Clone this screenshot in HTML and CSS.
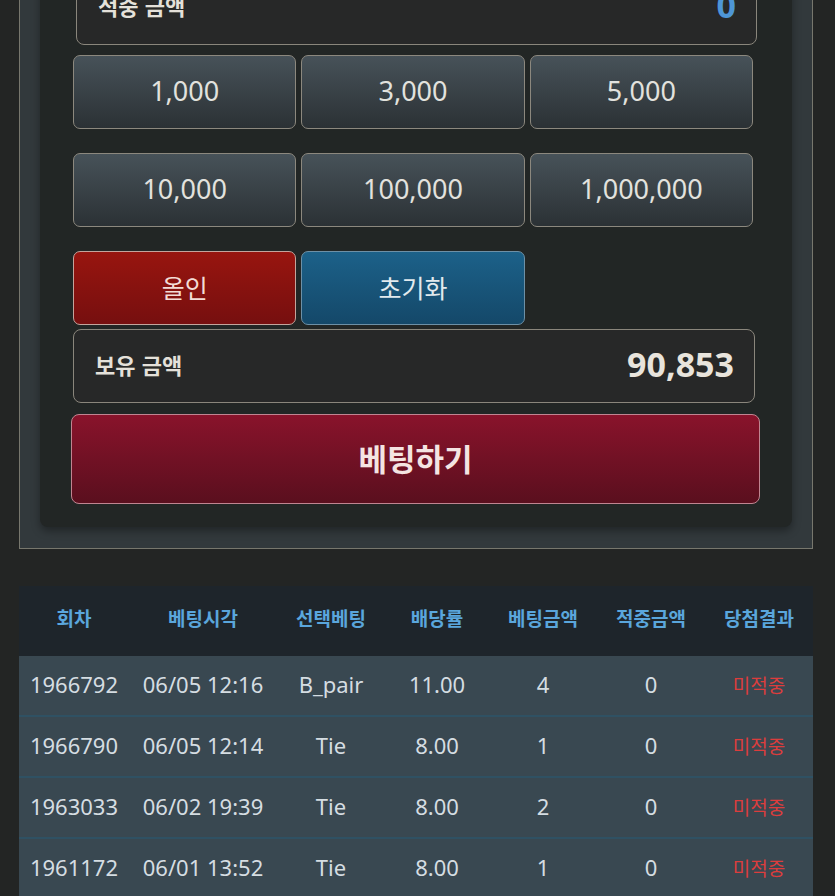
FILE: index.html
```html
<!DOCTYPE html>
<html lang="ko">
<head>
<meta charset="utf-8">
<title>베팅</title>
<link rel="stylesheet" href="styles.css">
</head>
<body>
    <div class="Wrap">
        <div class="Panel">
            <div class="Card">
                <div class="AmountBox HitBox">
                    <span class="AmountLabel">적중 금액</span>
                    <span class="AmountValue Blue">0</span>
                </div>

                <div class="ChipGrid">
                    <button class="Chip">1,000</button>
                    <button class="Chip">3,000</button>
                    <button class="Chip">5,000</button>
                    <button class="Chip">10,000</button>
                    <button class="Chip">100,000</button>
                    <button class="Chip">1,000,000</button>
                    <button class="Chip AllIn">올인</button>
                    <button class="Chip Reset">초기화</button>
                </div>

                <div class="AmountBox HoldBox">
                    <span class="AmountLabel">보유 금액</span>
                    <span class="AmountValue">90,853</span>
                </div>

                <button class="BetButton">베팅하기</button>
            </div>
        </div>

        <table class="History">
            <colgroup>
                <col style="width: 110px">
                <col style="width: 148px">
                <col style="width: 108px">
                <col style="width: 104px">
                <col style="width: 108px">
                <col style="width: 108px">
                <col style="width: 108px">
            </colgroup>
            <thead>
                <tr>
                    <th>회차</th>
                    <th>베팅시각</th>
                    <th>선택베팅</th>
                    <th>배당률</th>
                    <th>베팅금액</th>
                    <th>적중금액</th>
                    <th>당첨결과</th>
                </tr>
            </thead>
            <tbody>
                <tr>
                    <td>1966792</td>
                    <td>06/05 12:16</td>
                    <td>B_pair</td>
                    <td>11.00</td>
                    <td>4</td>
                    <td>0</td>
                    <td class="Miss">미적중</td>
                </tr>
                <tr>
                    <td>1966790</td>
                    <td>06/05 12:14</td>
                    <td>Tie</td>
                    <td>8.00</td>
                    <td>1</td>
                    <td>0</td>
                    <td class="Miss">미적중</td>
                </tr>
                <tr>
                    <td>1963033</td>
                    <td>06/02 19:39</td>
                    <td>Tie</td>
                    <td>8.00</td>
                    <td>2</td>
                    <td>0</td>
                    <td class="Miss">미적중</td>
                </tr>
                <tr>
                    <td>1961172</td>
                    <td>06/01 13:52</td>
                    <td>Tie</td>
                    <td>8.00</td>
                    <td>1</td>
                    <td>0</td>
                    <td class="Miss">미적중</td>
                </tr>
            </tbody>
        </table>
    </div>
</body>
</html>
```

FILE: styles.css
```css
body {
    margin: 0px;
    background-color: #232524;
    font-family: "Noto Sans", "Noto Sans CJK KR", sans-serif;
    overflow: hidden;
}

.Wrap {
    padding: 0px 22px 0px 19px;
}

/* outer slate frame, scrolled so its top is off screen */
.Panel {
    margin-top: -70px;
    border: 1px solid #77776d;
    background-color: #32393c;
    padding: 20px 20px 21px 20px;
}

.Card {
    background-color: #222625;
    border-radius: 8px;
    box-shadow: 0px 4px 8px rgba(0, 0, 0, 0.35);
    padding: 20px 32px 23px 31px;
}

.AmountBox {
    height: 74px;
    box-sizing: border-box;
    border: 1px solid #8a867c;
    border-radius: 8px;
    background-color: #272828;
    display: flex;
    align-items: center;
    justify-content: space-between;
    padding: 0px 20px 0px 21px;
}

.HitBox {
    margin: 0px 3px 0px 5px;
    padding-bottom: 6px;
}

.HoldBox {
    margin: 4px 5px 0px 2px;
    padding-bottom: 4px;
}

.AmountLabel {
    font-family: "Noto Sans CJK KR", sans-serif;
    font-weight: 700;
    font-size: 22px;
    color: #e4e1da;
}

.AmountValue {
    font-weight: 700;
    font-size: 34px;
    color: #e8e4dc;
}

.Blue {
    color: #4e96d6;
}

.ChipGrid {
    display: grid;
    grid-template-columns: 1fr 1fr 1fr;
    column-gap: 5px;
    row-gap: 24px;
    margin: 10px 7px 0px 2px;
}

.Chip {
    height: 74px;
    border: 1px solid #8c887e;
    border-radius: 7px;
    background: linear-gradient(#475259, #2b3135);
    color: #e2e2de;
    font-family: "Noto Sans", "Noto Sans CJK KR", sans-serif;
    font-size: 27px;
    padding: 0px 0px 3px 0px;
}

.AllIn {
    background: linear-gradient(#98150f, #760f0f);
    border-color: #c4a49c;
    color: #f3dcd6;
    font-size: 25px;
}

.Reset {
    background: linear-gradient(#1c6189, #144869);
    border-color: #6d90a6;
    color: #e2eaee;
    font-size: 25px;
}

.BetButton {
    display: block;
    width: 100%;
    height: 90px;
    margin-top: 11px;
    border: 1px solid #c08591;
    border-radius: 8px;
    background: linear-gradient(#89132b, #5a0f1e);
    color: #f4e4e2;
    font-family: "Noto Sans CJK KR", sans-serif;
    font-weight: 700;
    font-size: 31px;
    padding: 0px 0px 4px 0px;
}

.History {
    margin-top: 37px;
    width: 794px;
    border-collapse: collapse;
    table-layout: fixed;
}

.History th {
    height: 62px;
    background-color: #1e252b;
    color: #5aa6dc;
    font-family: "Noto Sans CJK KR", sans-serif;
    font-weight: 700;
    font-size: 19px;
    padding: 0px 0px 8px 0px;
}

.History td {
    height: 56px;
    background-color: #394851;
    border-bottom: 2px solid #2f5163;
    color: #d5dde2;
    font-size: 22px;
    text-align: center;
    padding: 0px 0px 3px 0px;
    white-space: nowrap;
}

.History td.Miss {
    color: #dc3d3d;
    font-family: "Noto Sans CJK KR", sans-serif;
    font-size: 19px;
}
```
